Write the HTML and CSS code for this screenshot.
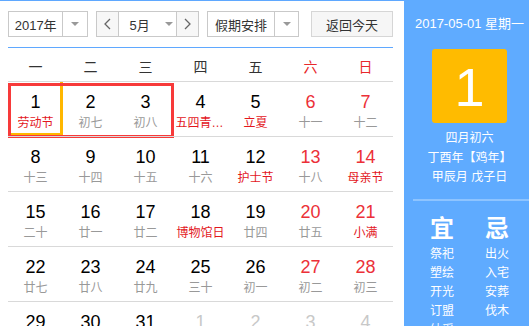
FILE: index.html
```html
<!DOCTYPE html>
<html lang="zh-CN">
<head>
    <meta charset="UTF-8">
    <title>万年历</title>
    <link rel="stylesheet" href="styles.css">
</head>
<body>
    <div class="app">
        <!-- Left: calendar grid -->
        <div class="cal">
            <div class="toolbar">
                <div class="select year-select">
                    <span class="select-text">2017年</span>
                    <span class="select-arrow"><i class="caret"></i></span>
                </div>
                <div class="month-group">
                    <span class="nav-btn">
                        <svg width="7" height="12" viewBox="0 0 7 12"><polyline points="6,1 1,6 6,11" fill="none" stroke="#666" stroke-width="1.3"/></svg>
                    </span>
                    <span class="month-select">
                        <span class="select-text">5月</span>
                        <i class="caret"></i>
                    </span>
                    <span class="nav-btn">
                        <svg width="7" height="12" viewBox="0 0 7 12"><polyline points="1,1 6,6 1,11" fill="none" stroke="#666" stroke-width="1.3"/></svg>
                    </span>
                </div>
                <div class="select holiday-select">
                    <span class="select-text">假期安排</span>
                    <span class="select-arrow"><i class="caret"></i></span>
                </div>
                <div class="today-btn">返回今天</div>
            </div>

            <div class="week-head">
                <span>一</span><span>二</span><span>三</span><span>四</span><span>五</span>
                <span class="weekend">六</span><span class="weekend">日</span>
            </div>

            <div class="weeks">
                <div class="week">
                    <div class="range-box"></div>
                    <div class="day today"><b>1</b><em class="festival">劳动节</em></div>
                    <div class="day"><b>2</b><em>初七</em></div>
                    <div class="day"><b>3</b><em>初八</em></div>
                    <div class="day"><b>4</b><em class="festival">五四青年节</em></div>
                    <div class="day"><b>5</b><em class="festival">立夏</em></div>
                    <div class="day weekend"><b>6</b><em>十一</em></div>
                    <div class="day weekend"><b>7</b><em>十二</em></div>
                </div>
                <div class="week">
                    <div class="day"><b>8</b><em>十三</em></div>
                    <div class="day"><b>9</b><em>十四</em></div>
                    <div class="day"><b>10</b><em>十五</em></div>
                    <div class="day"><b>11</b><em>十六</em></div>
                    <div class="day"><b>12</b><em class="festival">护士节</em></div>
                    <div class="day weekend"><b>13</b><em>十八</em></div>
                    <div class="day weekend"><b>14</b><em class="festival">母亲节</em></div>
                </div>
                <div class="week">
                    <div class="day"><b>15</b><em>二十</em></div>
                    <div class="day"><b>16</b><em>廿一</em></div>
                    <div class="day"><b>17</b><em>廿二</em></div>
                    <div class="day"><b>18</b><em class="festival">博物馆日</em></div>
                    <div class="day"><b>19</b><em>廿四</em></div>
                    <div class="day weekend"><b>20</b><em>廿五</em></div>
                    <div class="day weekend"><b>21</b><em class="festival">小满</em></div>
                </div>
                <div class="week">
                    <div class="day"><b>22</b><em>廿七</em></div>
                    <div class="day"><b>23</b><em>廿八</em></div>
                    <div class="day"><b>24</b><em>廿九</em></div>
                    <div class="day"><b>25</b><em>三十</em></div>
                    <div class="day"><b>26</b><em>初一</em></div>
                    <div class="day weekend"><b>27</b><em>初二</em></div>
                    <div class="day weekend"><b>28</b><em>初三</em></div>
                </div>
                <div class="week">
                    <div class="day"><b>29</b><em>初四</em></div>
                    <div class="day"><b>30</b><em class="festival">端午节</em></div>
                    <div class="day"><b>31</b><em>初六</em></div>
                    <div class="day other"><b>1</b><em>初七</em></div>
                    <div class="day other"><b>2</b><em>初八</em></div>
                    <div class="day other"><b>3</b><em>初九</em></div>
                    <div class="day other"><b>4</b><em>初十</em></div>
                </div>
            </div>
        </div>

        <!-- Right: selected day detail -->
        <div class="side">
            <div class="side-date">2017-05-01 星期一</div>
            <div class="big-day">1</div>
            <div class="lunar-info">
                <p>四月初六</p>
                <p>丁酉年【鸡年】</p>
                <p>甲辰月 戊子日</p>
            </div>
            <div class="side-line"></div>
            <div class="almanac">
                <div class="almanac-col">
                    <h3>宜</h3>
                    <p>祭祀</p><p>塑绘</p><p>开光</p><p>订盟</p><p>纳采</p><p>嫁娶</p>
                </div>
                <div class="almanac-col">
                    <h3>忌</h3>
                    <p>出火</p><p>入宅</p><p>安葬</p><p>伐木</p>
                </div>
            </div>
        </div>
    </div>
</body>
</html>
```

FILE: styles.css
```css
/* General */
html, body {
    margin: 0;
    padding: 0;
    overflow: hidden;
    background: #fff;
}

body {
    font-family: "Liberation Sans", "Noto Sans CJK SC", sans-serif;
    color: #333;
}

.app {
    display: flex;
    height: 326px;
}

/* Left calendar */
.cal {
    width: 385px;
    flex: none;
    padding: 0 11px 0 8px;
    border-top: 1px solid #5fa8ff;
}

.toolbar {
    display: flex;
    align-items: stretch;
    height: 26px;
    margin-top: 10px;
    padding-bottom: 10px;
    border-bottom: 1px solid #5fa8ff;
    font-size: 13px;
}

.select {
    display: flex;
    box-sizing: border-box;
    border: 1px solid #c9c9c9;
    background: #fff;
    margin-right: 8px;
}

.select-text {
    display: flex;
    align-items: center;
    justify-content: center;
    color: #333;
}

.select-arrow {
    display: flex;
    align-items: center;
    justify-content: center;
    width: 24px;
    border-left: 1px solid #c9c9c9;
}

.caret {
    display: block;
    width: 0;
    height: 0;
    border-top: 4px solid #999;
    border-left: 4px solid transparent;
    border-right: 4px solid transparent;
}

.year-select {
    width: 80px;
}

.year-select .select-text {
    width: 54px;
}

.holiday-select {
    width: 92px;
}

.holiday-select .select-text {
    width: 69px;
}

.month-group {
    display: flex;
    box-sizing: border-box;
    width: 103px;
    border: 1px solid #c9c9c9;
    margin-right: 8px;
}

.nav-btn {
    display: flex;
    align-items: center;
    justify-content: center;
    width: 21px;
    background: #f7f7f7;
}

.month-select {
    display: flex;
    align-items: center;
    width: 59px;
    border-left: 1px solid #c9c9c9;
    border-right: 1px solid #c9c9c9;
    background: #fff;
}

.month-select .select-text {
    width: 38px;
    padding-left: 2px;
}

.month-select .caret {
    margin-left: 6px;
}

.today-btn {
    display: flex;
    align-items: center;
    justify-content: center;
    box-sizing: border-box;
    width: 82px;
    margin-left: auto;
    border: 1px solid #d6d6d6;
    background: #f6f6f6;
    color: #333;
}

/* Week header */
.week-head {
    display: grid;
    grid-template-columns: repeat(7, 55px);
    height: 33px;
    align-items: center;
    font-size: 14px;
    color: #333;
}

.week-head span {
    text-align: center;
    padding-top: 2px;
}

.week-head .weekend {
    color: #e8282b;
}

/* Day cells */
.week {
    position: relative;
    display: grid;
    grid-template-columns: repeat(7, 55px);
    height: 54px;
    border-top: 1px solid #d9d9d9;
}

.day {
    box-sizing: border-box;
    padding-top: 9px;
    text-align: center;
}

.day b {
    display: block;
    height: 22px;
    line-height: 22px;
    font-size: 18px;
    font-weight: normal;
    color: #000;
}

.day em {
    display: block;
    max-width: 50px;
    margin: 0 auto;
    line-height: 20px;
    font-size: 12px;
    font-style: normal;
    color: #999;
    white-space: nowrap;
    overflow: hidden;
    text-overflow: ellipsis;
}

.day.weekend b {
    color: #ec3038;
}

.day em.festival {
    color: #e3171d;
}

.day.other b {
    color: #c8c8c8;
}

.day.other em {
    color: #c8c8c8;
}

.day.today {
    box-shadow: inset -3px -3px 0 #ffb700;
}

/* holiday range outline */
.range-box {
    position: absolute;
    left: 0;
    top: 1px;
    width: 166px;
    height: 55px;
    box-sizing: border-box;
    border: 3px solid #f73a3a;
    pointer-events: none;
}

/* Right detail panel */
.side {
    width: 131px;
    flex: none;
    background: #5fabff;
    color: #fff;
    text-align: center;
    padding-top: 14px;
}

.side-date {
    font-size: 13px;
    line-height: 20px;
    white-space: nowrap;
}

.big-day {
    width: 75px;
    height: 74px;
    margin: 15px auto 0;
    border-radius: 3px;
    background: #ffbb00;
    font-size: 54px;
    line-height: 76px;
    color: #fff;
}

.lunar-info {
    margin-top: 6px;
    font-size: 12px;
}

.lunar-info p {
    margin: 0;
    line-height: 19.5px;
}

.side-line {
    height: 2px;
    margin: 11px 0 0 9px;
    background: #8ec4ff;
}

.almanac {
    display: flex;
    justify-content: center;
    margin-top: 13px;
}

.almanac-col {
    width: 55px;
}

.almanac-col h3 {
    margin: 0 0 1px;
    font-size: 24px;
    line-height: 30px;
    font-weight: bold;
}

.almanac-col p {
    margin: 0;
    font-size: 12px;
    line-height: 19px;
}
```
